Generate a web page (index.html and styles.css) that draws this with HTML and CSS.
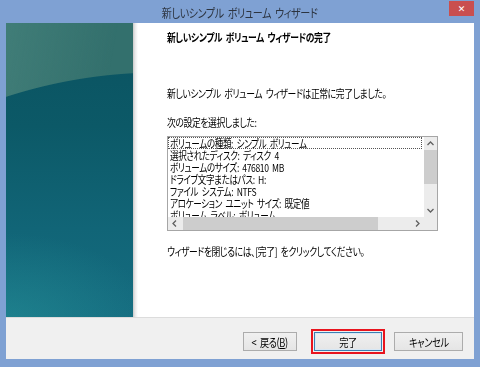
FILE: index.html
```html
<!DOCTYPE html>
<html lang="ja">
<head>
<meta charset="utf-8">
<link rel="stylesheet" href="styles.css">
</head>
<body>
<div class="window">
  <div class="titlebar">
    <span class="title cx cc">新しいシンプル ボリューム ウィザード</span>
    <span class="close">✕</span>
  </div>
  <div class="frame">
    <div class="main">
      <div class="banner"></div>
      <div class="page">
        <div class="heading"><span class="cx">新しいシンプル ボリューム ウィザードの完了</span></div>
        <p class="msg"><span class="cx">新しいシンプル ボリューム ウィザードは正常に完了しました。</span></p>
        <p class="label"><span class="cx">次の設定を選択しました:</span></p>
        <div class="listbox">
          <div class="items">
            <div class="item focus"><span class="cx">ボリュームの種類: シンプル ボリューム</span></div>
            <div class="item"><span class="cx">選択されたディスク: ディスク 4</span></div>
            <div class="item"><span class="cx">ボリュームのサイズ: 476810 MB</span></div>
            <div class="item"><span class="cx">ドライブ文字またはパス: H:</span></div>
            <div class="item"><span class="cx">ファイル システム: NTFS</span></div>
            <div class="item"><span class="cx">アロケーション ユニット サイズ: 既定値</span></div>
            <div class="item"><span class="cx">ボリューム ラベル: ボリューム</span></div>
          </div>
          <div class="vscroll">
            <svg class="arrow" width="13" height="13" viewBox="0 0 13 13"><path d="M3.5 8 L6.5 5 L9.5 8" fill="none" stroke="#606060" stroke-width="1.3"/></svg>
            <div class="vthumb"></div>
            <div class="vtrack"></div>
            <svg class="arrow" width="13" height="13" viewBox="0 0 13 13"><path d="M3.5 5 L6.5 8 L9.5 5" fill="none" stroke="#606060" stroke-width="1.3"/></svg>
          </div>
          <div class="hscroll">
            <svg class="arrow" width="13" height="13" viewBox="0 0 13 13"><path d="M8 3.5 L5 6.5 L8 9.5" fill="none" stroke="#606060" stroke-width="1.3"/></svg>
            <div class="hthumb"></div>
            <div class="htrack"></div>
            <svg class="arrow" width="13" height="13" viewBox="0 0 13 13"><path d="M5 3.5 L8 6.5 L5 9.5" fill="none" stroke="#606060" stroke-width="1.3"/></svg>
          </div>
          <div class="corner"></div>
        </div>
        <p class="closing"><span class="cx">ウィザードを閉じるには、[完了] をクリックしてください。</span></p>
      </div>
    </div>
    <div class="footer">
      <button class="btn back"><span class="cx cc">&lt; 戻る(<u>B</u>)</span></button>
      <button class="btn finish"><span class="cx cc">完了</span></button>
      <button class="btn cancel"><span class="cx cc">キャンセル</span></button>
    </div>
  </div>
</div>
</body>
</html>
```
FILE: styles.css
```css
* { box-sizing: border-box; }
html, body { margin: 0; padding: 0; }
body {
  width: 480px;
  height: 367px;
  overflow: hidden;
  font-family: "Noto Sans CJK JP", "Noto Sans", sans-serif;
  font-feature-settings: "palt";
  font-size: 11px;
  color: #000;
}
.cx {
  display: inline-block;
  white-space: nowrap;
  letter-spacing: -0.5px;
  word-spacing: 2.5px;
  transform: scaleX(0.8);
  transform-origin: 0 50%;
}
.cc { transform-origin: 50% 50%; }
.window {
  width: 480px;
  height: 367px;
  background: #7fa1d3;
  display: flex;
  flex-direction: column;
}
.titlebar {
  height: 23px;
  display: flex;
  justify-content: center;
  align-items: center;
  position: relative;
  padding-top: 3px;
}
.title {
  font-size: 12px;
  color: #2c3440;
  line-height: 16px;
  transform: scaleX(0.84);
}
.close {
  position: absolute;
  top: 1px;
  right: 6px;
  width: 25px;
  height: 15px;
  background: #c94f4f;
  color: #fff;
  font-size: 9px;
  font-weight: bold;
  display: flex;
  align-items: center;
  justify-content: center;
  font-family: "DejaVu Sans", sans-serif;
}
.frame {
  margin: 0 6px;
  height: 336px;
  display: flex;
  flex-direction: column;
}
.main {
  height: 294px;
  display: grid;
  grid-template-columns: 127px 1fr;
}
.banner {
  background:
    radial-gradient(ellipse 150px 90px at 0px 300px, rgba(40,150,155,0.5), rgba(40,150,155,0) 100%),
    radial-gradient(circle 500px at 154px 549px, rgba(0,0,0,0) 99.8%, #33706d 100%),
    linear-gradient(to bottom, #0a5260 0%, #0c5967 35%, #116577 70%, #156c80 100%);
  position: relative;
}
.banner::before {
  content: "";
  position: absolute;
  left: 0; top: 0; right: 0; height: 80px;
  background: linear-gradient(100deg, rgba(90,150,140,0.35), rgba(0,0,0,0) 80%);
  -webkit-mask: radial-gradient(circle 500px at 154px 549px, transparent 99.8%, #000 100%);
  mask: radial-gradient(circle 500px at 154px 549px, transparent 99.8%, #000 100%);
}
.page {
  background: linear-gradient(to right, #c9c9c9 0px, #e8e8e8 2px, #fff 5px);
  padding: 6px 0 0 34px;
  line-height: 16px;
}
.heading {
  font-weight: bold;
  height: 16px;
}
.msg {
  margin: 40px 0 0;
}
.label {
  margin: 13px 0 0;
}
.listbox {
  margin-top: 6px;
  width: 271px;
  height: 95px;
  border: 1px solid #a6a6a6;
  display: grid;
  grid-template-columns: 1fr 13px;
  grid-template-rows: 80px 13px;
  overflow: hidden;
}
.items {
  overflow: hidden;
}
.item {
  height: 12px;
  line-height: 12px;
  padding-left: 2px;
  white-space: nowrap;
}
.item .cx {
  transform: scaleX(0.78);
}
.item.focus {
  outline: 1px dotted #555;
  outline-offset: -1px;
  margin-right: 2px;
}
.vscroll {
  background: #ececec;
  display: flex;
  flex-direction: column;
}
.vthumb {
  height: 34px;
  background: #cdcdcd;
}
.vtrack { flex: 1; }
.hscroll {
  background: #ececec;
  display: flex;
  align-items: stretch;
}
.hthumb {
  width: 195px;
  margin-left: 2px;
  background: #cdcdcd;
}
.htrack { flex: 1; }
.arrow { display: block; flex: none; }
.corner { background: #ececec; }
.closing {
  margin: 12px 0 0;
}
.footer {
  height: 42px;
  background: #f0f0f0;
  border-top: 1px solid #dcdcdc;
  display: flex;
  justify-content: flex-end;
  align-items: flex-start;
  padding: 14px 11px 0 0;
}
.btn {
  height: 19px;
  border: 1px solid #acacac;
  background: linear-gradient(#f0f0f0, #e5e5e5);
  font-family: "Noto Sans CJK JP", "Noto Sans", sans-serif;
  font-feature-settings: "palt";
  font-size: 11.5px;
  line-height: 16px;
  padding: 0;
  color: #000;
}
.back { width: 54px; }
.finish {
  width: 68px;
  margin-left: 17px;
  border-color: #3c7fb1;
  box-shadow: inset 0 0 0 1px #d8e8f5;
  outline: 2px solid #e8141e;
  outline-offset: 1px;
}
.cancel { width: 69px; margin-left: 12px; }
```
